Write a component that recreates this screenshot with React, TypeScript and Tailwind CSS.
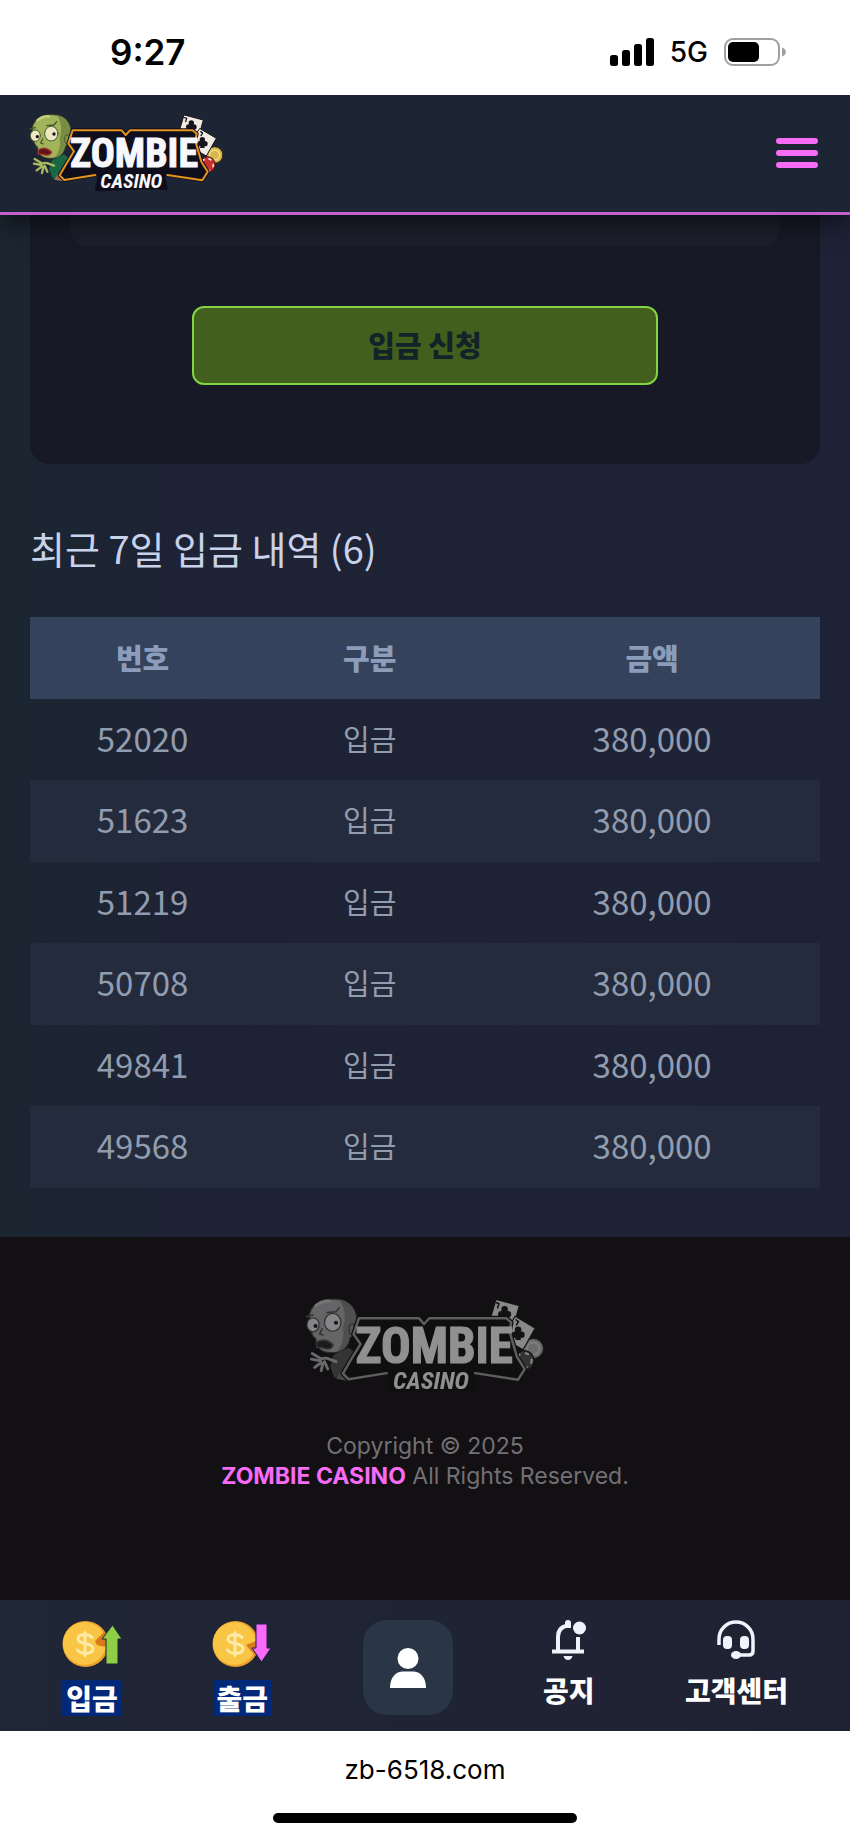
import type { ReactNode } from "react";

const deposits = [
  { id: "52020", kind: "입금", amount: "380,000" },
  { id: "51623", kind: "입금", amount: "380,000" },
  { id: "51219", kind: "입금", amount: "380,000" },
  { id: "50708", kind: "입금", amount: "380,000" },
  { id: "49841", kind: "입금", amount: "380,000" },
  { id: "49568", kind: "입금", amount: "380,000" },
];

function Club({ x, y }: { x: number; y: number }) {
  return (
    <g fill="#16141f">
      <circle cx={x} cy={y - 8} r="8" />
      <circle cx={x - 8} cy={y + 4} r="8" />
      <circle cx={x + 8} cy={y + 4} r="8" />
      <path d={`M${x - 2} ${y - 4}h4l5 21h-14z`} />
    </g>
  );
}

function Logo({ className }: { className: string }) {
  return (
    <svg viewBox="27 40 585 237" className={className} role="img" aria-label="Zombie Casino">
      <g strokeLinejoin="round" strokeLinecap="round">
        {/* cards and chips */}
        <path d="M493 46l57 15-17 60-57-18z" fill="#f1ebe2" stroke="#1a1720" strokeWidth="3" />
        <Club x={514} y={78} />
        <path d="M494 54l6 2-3 10M535 104l6-1" stroke="#16141f" strokeWidth="4" fill="none" />
        <circle cx="584" cy="166" r="25" fill="#d9b84b" stroke="#2a2018" strokeWidth="3" />
        <circle cx="584" cy="166" r="15" fill="none" stroke="#f3de86" strokeWidth="4" />
        <path d="M540 87l49 29-30 53-52-30z" fill="#f1ebe2" stroke="#1a1720" strokeWidth="3" />
        <Club x={547} y={128} />
        <path d="M542 96l6 4-5 8" stroke="#16141f" strokeWidth="4" fill="none" />
        <circle cx="562" cy="195" r="24" fill="#c9302c" stroke="#2a1518" strokeWidth="3" />
        <circle cx="562" cy="195" r="18" fill="none" stroke="#f6e9e4" strokeWidth="5" strokeDasharray="6 16" />

        {/* body and hands */}
        <path d="M96 182l36-18 22 16-22 52-34 5-10-28z" fill="#176843" />
        <path d="M102 240l12-18 18 4 4 20z" fill="#9a6a4c" />
        <path
          d="M44 178l20 12M42 192l22 4M50 212l16-12M66 220l4-18M82 216l-8-18M62 194q12-8 24-2l16 6"
          stroke="#a9bb63"
          strokeWidth="7"
          fill="none"
        />

        {/* head */}
        <path
          d="M37 96C34 62 62 45 98 45c37 0 57 25 54 59-1 20-7 30-16 35-4 25-20 37-45 37-26 0-38-14-38-34-11-6-15-25-16-46z"
          fill="#a2b45a"
          stroke="#3c4a26"
          strokeWidth="3"
        />
        <path
          d="M110 46c28 5 44 27 41 58-1 20-7 30-16 35-3 20-14 31-30 35 14-18 17-40 14-58 8-24 6-48-9-70z"
          fill="#768d43"
        />
        <path d="M52 62q16-14 36-12" stroke="#c4d180" strokeWidth="7" fill="none" />
        <path d="M80 78l22-2 8-10M30 88l16-4M68 118l-6 12 8 3" stroke="#46552b" strokeWidth="4" fill="none" />
        <ellipse cx="46" cy="108" rx="15" ry="17" fill="#ece8c2" stroke="#46552b" strokeWidth="3" />
        <ellipse cx="94" cy="102" rx="20" ry="22" fill="#ece8c2" stroke="#46552b" strokeWidth="3" />
        <circle cx="52" cy="111" r="5" fill="#16141f" />
        <circle cx="102" cy="103" r="5" fill="#16141f" />
        <path d="M55 151q20-14 40 6-4 12-20 9-14-4-20-3z" fill="#5c1418" stroke="#a63a30" strokeWidth="4" />
        <ellipse cx="141" cy="119" rx="7" ry="13" fill="#879a4b" stroke="#46552b" strokeWidth="3" />

        {/* name plate */}
        <path
          d="M158 92h147l12 14 13-14h188l12 10-4 22 18 62 19 30-16 26-117-20H238l-105 19-14-14 22-38 23-34-19-24z"
          fill="#0f0e1c"
          stroke="#0f0e1c"
          strokeWidth="12"
        />
        <path
          d="M226 226l-93 15-14-14 22-38 21-34-17-24 13-39h147l12 14 13-14h188l12 10-4 22 18 62 19 30-16 26-105-16"
          fill="none"
          stroke="#e8931e"
          strokeWidth="6"
        />
        <path d="M240 212h190l9 56q-40-6-104-2t-106 5z" fill="#0f0e1c" stroke="#0f0e1c" strokeWidth="8" />
      </g>
      <g fill="#f8f7fb" textAnchor="middle" className="font-['Roboto_Condensed','Liberation_Sans_Narrow',sans-serif] font-bold">
        <text x="342" y="202" stroke="#f8f7fb" strokeWidth="3" className="text-[120px]">
          ZOMBIE
        </text>
        <text x="334" y="266" className="text-[60px] italic">
          CASINO
        </text>
      </g>
    </svg>
  );
}

function StatusBar() {
  return (
    <div className="relative z-20 flex h-[95px] items-center justify-between bg-white pt-2 pr-16 pl-[110px] font-['Inter',sans-serif] text-black">
      <span className="text-[35px] leading-10 font-semibold">9:27</span>
      <div className="flex items-center gap-4">
        <svg viewBox="0 0 44 28" className="h-7 w-11" aria-hidden="true">
          <rect x="0" y="17" width="8" height="11" rx="2.5" />
          <rect x="12" y="12" width="8" height="16" rx="2.5" />
          <rect x="24" y="6" width="8" height="22" rx="2.5" />
          <rect x="36" y="0" width="8" height="28" rx="2.5" />
        </svg>
        <span className="text-[28px] leading-8 font-medium">5G</span>
        <svg viewBox="0 0 62 28" className="h-7 w-[62px]" aria-hidden="true">
          <rect x="1" y="1" width="54" height="26" rx="8" fill="none" stroke="#a0a0a0" strokeWidth="2" />
          <rect x="4" y="4" width="31" height="20" rx="5" />
          <path d="M58 9.500c5 1 5 8 0 9z" fill="#a0a0a0" />
        </svg>
      </div>
    </div>
  );
}

function Header() {
  return (
    <header className="relative z-10 flex h-[120px] items-center justify-between border-b-[3px] border-[#c55fd0] bg-[#1d2433] pr-8 pb-[2px] pl-[29px] shadow-[0_8px_24px_rgba(0,0,0,0.55)]">
      <a href="#home">
        <Logo className="h-[79px] w-[195px]" />
      </a>
      <button type="button" aria-label="메뉴" className="flex flex-col gap-[6px]">
        <span className="h-[6px] w-[42px] rounded-full bg-[#f76bf7]" />
        <span className="h-[6px] w-[42px] rounded-full bg-[#f76bf7]" />
        <span className="h-[6px] w-[42px] rounded-full bg-[#f76bf7]" />
      </button>
    </header>
  );
}

function CoinIcon({ direction }: { direction: "up" | "down" }) {
  return (
    <svg viewBox="0 0 60 48" className="h-12 w-[60px]" aria-hidden="true">
      <circle cx="23.500" cy="24" r="23" fill="#eda12d" />
      <circle cx="22.500" cy="23.500" r="21.500" fill="#f8c544" />
      <path
        d="M30 17.500c-3-4-14-4-14 1.500 0 6 15 3 15 9.500 0 6-12 6.500-15.500 1.500M23 12.500v23"
        fill="none"
        stroke="#fdeaa6"
        strokeWidth="3"
        strokeLinecap="round"
      />
      {direction === "up" ? (
        <>
          <path d="M33 21l9-9 5 2-4 13-8-2z" fill="#d97a1c" />
          <path d="M50.500 5L60 19h-4v25H44V19h-4z" fill="#8fcf45" stroke="#1d2433" strokeWidth="1" />
        </>
      ) : (
        <>
          <path d="M34 25l10-4v15l-5-5z" fill="#d97a1c" />
          <path d="M49.500 42L59 28h-4V4H44v24h-4z" fill="#f76bf7" stroke="#2a1b55" strokeWidth="1" />
        </>
      )}
    </svg>
  );
}

function PersonIcon() {
  return (
    <svg viewBox="0 0 36 40" className="h-10 w-9" fill="#fff" aria-hidden="true">
      <circle cx="18" cy="10.500" r="10.500" />
      <path d="M0 40C0 29 6 23.500 13 23.500h10C30 23.500 36 29 36 40z" />
    </svg>
  );
}

function BellIcon() {
  return (
    <svg viewBox="0 0 36 40" className="h-10 w-9" aria-hidden="true">
      <path d="M1 31.500h32M7 31V17C7 10 11 6.500 17 5.500M27 17v14" fill="none" stroke="#eef4fb" strokeWidth="4" />
      <path d="M14 8V3q0-3 3-3t3 3v5zM12.500 36h9q-1 4-4.500 4t-4.500-4z" fill="#eef4fb" />
      <circle cx="28.500" cy="8" r="6.500" fill="#eef4fb" />
    </svg>
  );
}

function HeadsetIcon() {
  return (
    <svg viewBox="0 0 38 40" className="h-10 w-[38px]" aria-hidden="true">
      <path d="M2 25v-6a17 17 0 0 1 34 0v12q0 4-4 4H19" fill="none" stroke="#eef4fb" strokeWidth="3.500" />
      <rect x="6" y="16" width="9" height="13" rx="4" fill="#eef4fb" />
      <rect x="23" y="16" width="9" height="13" rx="4" fill="#eef4fb" />
      <ellipse cx="19" cy="35" rx="5" ry="4" fill="#eef4fb" />
    </svg>
  );
}

function NavItem({ href, label, marked, children }: { href: string; label: string; marked?: boolean; children: ReactNode }) {
  return (
    <a href={href} className="flex flex-col items-center gap-3 text-[28px] leading-9 font-black text-white">
      {children}
      <span className={marked ? "bg-[#02287a] px-1" : ""}>{label}</span>
    </a>
  );
}

export default function App() {
  return (
    <div className="min-h-screen bg-white font-['Noto_Sans_CJK_KR',sans-serif]">
      <StatusBar />
      <Header />
      <main className="bg-linear-to-r from-[#1b2631] via-[#1d2334] via-20% to-[#1e2236] px-[30px] pb-[49px]">
        <section className="rounded-b-[20px] bg-[#171926] px-10 pb-[79px]">
          <div className="h-[31px] rounded-b-2xl bg-[#1c1f2c]" />
          <button
            type="button"
            className="mx-auto mt-[60px] block h-[79px] w-[466px] max-w-full rounded-xl border-2 border-[#83d443] bg-[#425f1d] pb-1 text-[29px] leading-9 font-black text-[#14232a]"
          >
            입금 신청
          </button>
        </section>
        <h1 className="pt-[56px] text-[38px] leading-[56px] text-[#c8d2ea]">최근 7일 입금 내역 (6)</h1>
        <table className="mt-[41px] w-full table-fixed border-collapse text-center text-[#929caf]">
          <colgroup>
            <col className="w-[28.5%]" />
            <col className="w-[29%]" />
            <col className="w-[42.5%]" />
          </colgroup>
          <thead>
            <tr className="h-[82px] bg-[#34425c] text-[29px] leading-9 text-[#8c9dbc]">
              <th className="pb-[2px] font-black">번호</th>
              <th className="pb-[2px] font-black">구분</th>
              <th className="pb-[2px] font-black">금액</th>
            </tr>
          </thead>
          <tbody>
            {deposits.map((row) => (
              <tr key={row.id} className="odd:h-[81px] even:h-[82px] even:bg-[#232b3c]">
                <td className="pb-1 text-[33px] leading-10">{row.id}</td>
                <td className="pb-1 text-[29px] leading-10">{row.kind}</td>
                <td className="pb-1 text-[33px] leading-10">{row.amount}</td>
              </tr>
            ))}
          </tbody>
        </table>
      </main>
      <footer className="flex flex-col items-center bg-[#121013] pt-[60px] pb-[109px]">
        <Logo className="h-[97px] w-[240px] opacity-55 grayscale" />
        <p className="mt-[37px] text-center font-['Inter',sans-serif] text-[23px] leading-[30px] text-[#737075]">
          Copyright © 2025
          <br />
          <strong className="font-bold text-[#f76bf7]">ZOMBIE CASINO</strong> All Rights Reserved.
        </p>
      </footer>
      <nav className="flex h-[131px] items-start justify-between bg-linear-to-r from-[#1f2635] to-[#1f2233] px-[62px] pt-5">
        <NavItem href="#deposit" label="입금" marked>
          <CoinIcon direction="up" />
        </NavItem>
        <NavItem href="#withdraw" label="출금" marked>
          <CoinIcon direction="down" />
        </NavItem>
        <a
          href="#profile"
          aria-label="내 정보"
          className="flex h-[95px] w-[90px] items-center justify-center rounded-3xl bg-[#2a3646]"
        >
          <PersonIcon />
        </a>
        <NavItem href="#notice" label="공지">
          <BellIcon />
        </NavItem>
        <NavItem href="#support" label="고객센터">
          <HeadsetIcon />
        </NavItem>
      </nav>
      <div className="flex flex-col items-center bg-white pt-5 pb-4 font-['Inter',sans-serif] text-black">
        <span className="text-[26px] leading-[38px]">zb-6518.com</span>
        <span className="mt-6 h-[10px] w-[304px] rounded-full bg-black" />
      </div>
    </div>
  );
}
